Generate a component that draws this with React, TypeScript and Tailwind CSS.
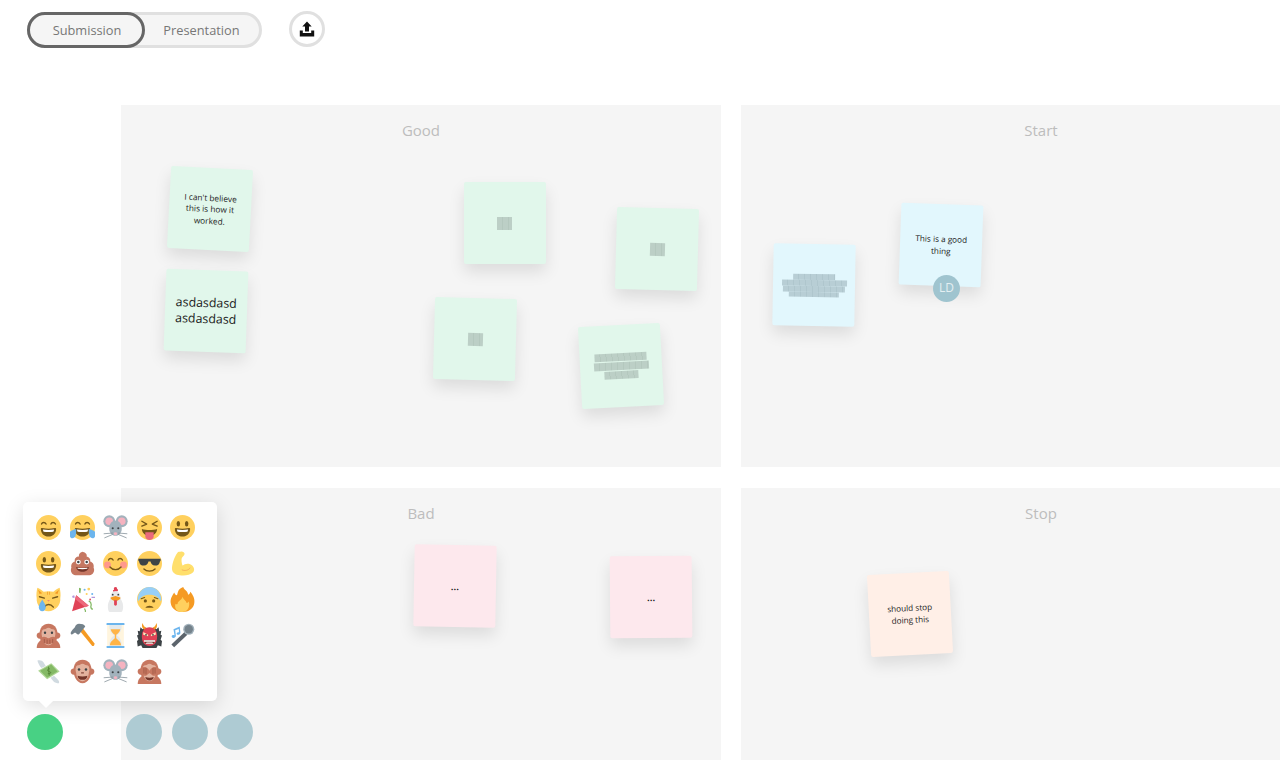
import React from "react";

const Y = "#FFCC4D";
const B = "#664500";

const Face = ({ children }: { children?: React.ReactNode }) => (
  <>
    <circle cx="18" cy="18" r="18" fill={Y} />
    {children}
  </>
);
const OpenMouth = () => (
  <>
    <path d="M7 20c0 6 4.500 11 11 11s11-5 11-11c0-1-1-1.300-2-1.100-3 .6-6 .9-9 .9s-6-.3-9-.9c-1-.2-2 .1-2 1.100z" fill={B} />
    <path d="M10 21c2.500.5 5 .7 8 .7s5.500-.2 8-.7c0 1.500-.5 2.500-1 3-4 .6-10 .6-14 0-.5-.5-1-1.500-1-3z" fill="#fff" />
  </>
);
const SmileEyes = () => (
  <>
    <path d="M8 13c1-3 5-3 6.500 0" fill="none" stroke={B} strokeWidth="2" strokeLinecap="round" />
    <path d="M21.500 13c1-3 5-3 6.500 0" fill="none" stroke={B} strokeWidth="2" strokeLinecap="round" />
  </>
);
const DotEyes = () => (
  <>
    <ellipse cx="12" cy="12.500" rx="2.500" ry="4" fill={B} />
    <ellipse cx="24" cy="12.500" rx="2.500" ry="4" fill={B} />
  </>
);
const Mouse = () => (
  <>
    <circle cx="9" cy="9" r="8.500" fill="#99AAB5" />
    <circle cx="27" cy="9" r="8.500" fill="#99AAB5" />
    <circle cx="9" cy="9" r="5.500" fill="#F4ABBA" />
    <circle cx="27" cy="9" r="5.500" fill="#F4ABBA" />
    <path d="M18 8c6 0 9 6 9 12 0 6-5 10-9 10s-9-4-9-10c0-6 3-12 9-12z" fill="#99AAB5" />
    <circle cx="14" cy="19" r="1.500" fill="#292F33" />
    <circle cx="22" cy="19" r="1.500" fill="#292F33" />
    <ellipse cx="18" cy="27" rx="2.500" ry="2" fill="#F4ABBA" />
    <path d="M14 26l-13 1M14 28l-12 5M22 26l13 1M22 28l12 5" stroke="#66757F" strokeWidth="1" fill="none" />
  </>
);
const MonkeyHead = () => (
  <>
    <circle cx="5.500" cy="18" r="4.500" fill="#C1694F" />
    <circle cx="30.500" cy="18" r="4.500" fill="#C1694F" />
    <path d="M18 1c8 0 13 6 13 15s-5 19-13 19S5 25 5 16 10 1 18 1z" fill="#C1694F" />
    <path d="M18 7c3 0 3 2 6 2 3 0 4 3 4 6s-1 4-1 6c0 5-4 11-9 11s-9-6-9-11c0-2-1-3-1-6s1-6 4-6c3 0 3-2 6-2z" fill="#E0AA94" />
  </>
);
const MonkeyBody = () => <path d="M1 36c0-8 6-14 17-14s17 6 17 14z" fill="#C1694F" />;

const E: Record<string, React.ReactNode> = {
  grin: (
    <Face>
      <SmileEyes />
      <OpenMouth />
    </Face>
  ),
  joy: (
    <>
      <Face>
        <SmileEyes />
        <OpenMouth />
      </Face>
      <path d="M1 23c2-1 6-3 8-3 0 3 0 7-1 10-1 4-7 5-8 1-1-3-1-6 1-8z" fill="#5DADEC" />
      <path d="M35 23c-2-1-6-3-8-3 0 3 0 7 1 10 1 4 7 5 8 1 1-3 1-6-1-8z" fill="#5DADEC" />
    </>
  ),
  mouse: <Mouse />,
  tongue: (
    <Face>
      <path d="M7 9l7 4-7 3M29 9l-7 4 7 3" fill="none" stroke={B} strokeWidth="2" strokeLinecap="round" strokeLinejoin="round" />
      <path d="M7 20c3 1 7 1.500 11 1.500s8-.5 11-1.500c0 3-2 7-6 9H13c-4-2-6-6-6-9z" fill={B} />
      <path d="M12 25h12v6c0 3-3 5-6 5s-6-2-6-5z" fill="#E8596E" />
    </Face>
  ),
  smiley: (
    <Face>
      <DotEyes />
      <OpenMouth />
    </Face>
  ),
  poop: (
    <>
      <path d="M18 1c5 1 7 4 6 7 4 1 6 4 5 7 4 1 6 5 5 9 2 4 0 10-6 11H8c-6-1-8-7-6-11-1-4 1-8 5-9-1-4 2-7 6-7-1-3 1-6 5-7z" fill="#BF6952" />
      <circle cx="12" cy="16" r="3.500" fill="#fff" />
      <circle cx="24" cy="16" r="3.500" fill="#fff" />
      <circle cx="12" cy="16" r="1.800" fill="#292F33" />
      <circle cx="24" cy="16" r="1.800" fill="#292F33" />
      <path d="M9 23c5 1.500 13 1.500 18 0 0 4-4 7-9 7s-9-3-9-7z" fill="#662113" />
      <path d="M11 24c4 .8 10 .8 14 0v1.500c-4 .8-10 .8-14 0z" fill="#fff" />
    </>
  ),
  blush: (
    <Face>
      <SmileEyes />
      <circle cx="6.500" cy="20" r="5" fill="#FF7892" opacity=".75" />
      <circle cx="29.500" cy="20" r="5" fill="#FF7892" opacity=".75" />
      <path d="M10 23c4 5 12 5 16 0" fill="none" stroke={B} strokeWidth="2" strokeLinecap="round" />
    </Face>
  ),
  cool: (
    <Face>
      <path d="M2 11h32v3l-1 1c-.5 4-3 6-7 6-4 0-6-3-6.500-6h-3c-.5 3-2.500 6-6.500 6s-6.500-2-7-6l-1-1z" fill="#292F33" />
      <path d="M10 26c4 4 12 4 16 0" fill="none" stroke={B} strokeWidth="2" strokeLinecap="round" />
    </Face>
  ),
  muscle: (
    <>
      <path d="M15 1c3-1 6 1 6 3 0 3-3 4-4 6-1 3 0 8 1 11 3-3 9-4 13-1 4 3 5 8 2 11-4 4-12 5-19 4-6-1-10-3-11-8-1-6 3-19 8-25 1-1 2-1 4-1z" fill="#FFDC5D" />
      <path d="M17 27c4 2 10 1 12-3" fill="none" stroke="#EF9645" strokeWidth="1" />
    </>
  ),
  crycat: (
    <>
      <path d="M2 1c3 1 7 4 9 6 4-1 10-1 14 0 2-2 6-5 9-6 1 4 2 10 1 15 1 10-7 19-17 19S0 26 1 16C0 11 1 5 2 1z" fill="#FFCC4D" />
      <path d="M3 4l6 5-4 1zM33 4l-6 5 4 1z" fill="#F4900C" />
      <path d="M16 7h1v4h-1zM19 7h1v4h-1z" fill="#F4900C" />
      <path d="M5 14l7 2M31 14l-7 2" stroke={B} strokeWidth="2" strokeLinecap="round" />
      <path d="M12 29c3-5 9-5 13 0" fill="none" stroke={B} strokeWidth="2" strokeLinecap="round" />
      <path d="M18 21l-2-2h4z" fill="#E0607E" />
      <path d="M9 18c2 4 5 7 5 11 0 3-2 6-5 6s-5-3-5-6c0-4 3-7 5-11z" fill="#5DADEC" />
    </>
  ),
  party: (
    <>
      <path d="M3 35l6-23 18 15z" fill="#DD2E44" />
      <path d="M9 12l18 15-5 2L7 17z" fill="#EA596E" />
      <path d="M3 13l3-1 1 3-3 1zM31 14h5v2h-5z" fill="#AA8DD8" />
      <path d="M13 1l3 1-1 7-2-1z" fill="#77B255" />
      <circle cx="21" cy="4" r="1.500" fill="#5DADEC" />
      <circle cx="27" cy="3" r="2" fill="#FFCC4D" />
      <circle cx="24" cy="10" r="1.500" fill="#FFCC4D" />
      <circle cx="32" cy="10" r="1.500" fill="#5DADEC" />
      <path d="M27 20c4 2 4 5 3 8 0 3 2 4 3 4M21 31c0 2 2 2 1 5" fill="none" stroke="#77B255" strokeWidth="1.800" />
      <circle cx="29" cy="18" r="1.300" fill="#DD2E44" />
    </>
  ),
  chicken: (
    <>
      <path d="M18 0c2 0 3 2 2 3 2 0 2 2 1 3l-6 1c-1-1-1-3 1-3-1-2 0-4 2-4z" fill="#DD2E44" />
      <path d="M18 6c5 0 7 4 7 9 0 2 4 6 4 13 0 5-1 8-3 8H10c-2 0-3-3-3-8 0-7 4-11 4-13 0-5 2-9 7-9z" fill="#E6E7E8" />
      <path d="M11 15l7-2 7 2c1 2-4 5-7 5s-8-3-7-5z" fill="#F4900C" />
      <circle cx="14" cy="11" r="1.300" fill="#292F33" />
      <circle cx="22" cy="11" r="1.300" fill="#292F33" />
      <path d="M16 19h4v6c0 1.500-1 2-2 2s-2-.5-2-2z" fill="#DD2E44" />
    </>
  ),
  fear: (
    <Face>
      <path d="M1 19C1 8 8 0 18 0s17 8 17 19c0 1-1 1-2 0-3-6-9-8-15-8S6 13 3 19c-1 1-2 1-2 0z" fill="#8CCAF7" />
      <circle cx="12" cy="20" r="2.300" fill={B} />
      <circle cx="24" cy="20" r="2.300" fill={B} />
      <path d="M6 17l5-2M30 17l-5-2" stroke={B} strokeWidth="1.500" strokeLinecap="round" />
      <path d="M12 30c2-4 10-4 12 0z" fill={B} />
    </Face>
  ),
  fire: (
    <>
      <path d="M19 0c2 5 7 6 7 11 2 0 3-2 3-4 4 4 7 10 6 16-1 8-8 13-17 13S2 31 1 23C0 16 4 12 6 8c1 2 2 4 4 4 2-4 0-8 9-12z" fill="#F4900C" />
      <path d="M18 14c1 4 5 5 6 9 2 0 2-1 3-2 2 5 0 15-9 15S6 30 8 24c1 1 2 1 3 0 0-4 6-5 7-10z" fill="#FFCC4D" />
    </>
  ),
  speak: (
    <>
      <MonkeyBody />
      <MonkeyHead />
      <circle cx="13" cy="14" r="1.700" fill="#292F33" />
      <circle cx="23" cy="14" r="1.700" fill="#292F33" />
      <path d="M8 21c4-3 7 0 10 1 3-1 6-4 10-1 1 4-4 9-10 10-6-1-11-6-10-10z" fill="#C1694F" />
      <path d="M12 23v6M16 24v6M20 24v6M24 23v6" stroke="#662113" strokeWidth=".6" />
    </>
  ),
  hammer: (
    <>
      <path d="M14 11l4-4 17 22c1 2-1 5-3 4z" fill="#F4900C" />
      <path d="M13 1c4 0 8 1 9 4l-8 10c-2 2-3 2-4 1l-2-2c-2 0-3 1-4 2-1 1-3 0-3-1v-1c1-3 4-6 6-8 1-3 3-5 6-5z" fill="#66757F" />
    </>
  ),
  hourglass: (
    <>
      <path d="M6 3h24v30H6z" fill="#FFE8B6" opacity=".5" />
      <path d="M9 3h18c0 7-2 12-7 15 5 3 7 8 7 15H9c0-7 2-12 7-15-5-3-7-8-7-15z" fill="#E1E8ED" />
      <path d="M11 9h14c-1 4-4 7-6 8v5c2 2 7 5 7 10H10c0-5 5-8 7-10v-5c-2-1-5-4-6-8z" fill="#FFAC33" />
      <rect x="5" y="0" width="26" height="3" rx="1" fill="#5DADEC" />
      <rect x="5" y="33" width="26" height="3" rx="1" fill="#5DADEC" />
    </>
  ),
  ogre: (
    <>
      <path d="M1 34l-1-8 2-2-2-6 2-1-1-6 3 1 1-6 3 3 3-3 3 2h8l3-2 3 3 3-3 1 6 3-1-1 6 2 1-2 6 2 2-1 8-5-2-2 4H8l-2-4z" fill="#292F33" />
      <path d="M8 0c-2 5 0 8 3 10l3-3C11 6 9 4 8 0zM28 0c2 5 0 8-3 10l-3-3c3-1 5-3 6-7z" fill="#F4900C" />
      <path d="M18 6c7 0 11 5 11 13 0 9-4 14-11 14S7 28 7 19C7 11 11 6 18 6z" fill="#DD2E44" />
      <path d="M9 13l7 4v2l-7-2zM27 13l-7 4v2l7-2z" fill="#FFE8B6" />
      <circle cx="13" cy="17" r="1.300" fill="#292F33" />
      <circle cx="23" cy="17" r="1.300" fill="#292F33" />
      <path d="M10 25h16l-2 5H12z" fill="#662113" />
      <path d="M10 25h16v2H10zM12 30l2-2h8l2 2z" fill="#fff" />
    </>
  ),
  mic: (
    <>
      <path d="M21 13l4 4L6 35l-4-4z" fill="#4B545D" />
      <circle cx="27" cy="9" r="8" fill="#99AAB5" />
      <circle cx="27" cy="9" r="6" fill="#66757F" />
      <path d="M5 9l9-4 1 9c0 2-2 3-3 3-3 0-3-3-1-3.500 1-.3 2 0 2 0l-.5-5-5 2 1 8c0 2-2 3-3 3-3 0-4-3-2-4 1-.5 2 0 3 0z" fill="#5DADEC" />
    </>
  ),
  money: (
    <>
      <path d="M3 17L22 6l12 12-18 11z" fill="#A7D28B" />
      <path d="M6 17L22 8l9 10-15 9z" fill="#77B255" />
      <path d="M20 14c-3 0-4 2-3 3s3 1 4 2-1 3-4 2M18 11l1 13" fill="none" stroke="#3E721D" strokeWidth="1.200" />
      <path d="M2 2c4-1 7 0 9 3l3 5-6 3C5 10 3 6 2 2zM26 24l5 5c2 2 3 4 2 6-3 0-6-1-8-3l-4-5z" fill="#CCD6DD" />
    </>
  ),
  monkey: (
    <>
      <MonkeyHead />
      <circle cx="13" cy="15" r="1.800" fill="#292F33" />
      <circle cx="23" cy="15" r="1.800" fill="#292F33" />
      <path d="M16 20h4" stroke="#662113" strokeWidth="1.500" />
      <path d="M11 24c4 1.500 10 1.500 14 0 0 4-3 6-7 6s-7-2-7-6z" fill="#662113" />
    </>
  ),
  see: (
    <>
      <MonkeyBody />
      <MonkeyHead />
      <path d="M4 18c0-6 6-7 9-6 2 1 4 3 5 5 1-2 3-4 5-5 3-1 9 0 9 6 0 5-5 7-9 6l-5-4-5 4c-4 1-9-1-9-6z" fill="#C1694F" />
      <path d="M10 13v8M13 13v9M23 13v9M26 13v8" stroke="#662113" strokeWidth=".6" />
      <path d="M12 26c4 1.500 8 1.500 12 0 0 3-3 5-6 5s-6-2-6-5z" fill="#662113" />
    </>
  ),
};

const rows = [
  ["grin", "joy", "mouse", "tongue", "smiley"],
  ["smiley", "poop", "blush", "cool", "muscle"],
  ["crycat", "party", "chicken", "fear", "fire"],
  ["speak", "hammer", "hourglass", "ogre", "mic"],
  ["money", "monkey", "mouse", "see"],
];

const noteBase =
  "absolute flex h-[82px] w-[82px] flex-col items-center justify-center rounded-[2px] shadow-[0_8px_16px_rgba(0,0,0,0.1)]";
const GREEN = "bg-[#e1f7eb]";
const BLUE = "bg-[#e2f7fd]";
const PINK = "bg-[#fde8ed]";
const PEACH = "bg-[#ffefe7]";
const GREEN_BAR = "bg-[repeating-linear-gradient(90deg,#bccfc6_0_5px,#b4c8be_5px_6px)]";
const BLUE_BAR = "bg-[repeating-linear-gradient(90deg,#b8ced5_0_5px,#afc6cd_5px_6px)]";

function Panel({ title, children }: { title: string; children?: React.ReactNode }) {
  return (
    <section className="relative h-[362px] w-[600px] bg-[#f5f5f5] pt-[14px] text-center">
      <h2 className="text-[15px] leading-[22px] text-[#bdbdbd]">{title}</h2>
      {children}
    </section>
  );
}

const Redact = ({ w, c, h }: { w: string; c: string; h: string }) => <div className={`${w} ${c} ${h}`} />;

export default function App() {
  return (
    <div className="relative h-[760px] w-[1280px] overflow-hidden bg-white font-['Open_Sans',sans-serif]">
      <header className="flex h-[105px] items-start pl-[27px] pt-[11px]">
        <div className="mt-px flex h-[36px] w-[235px] rounded-full border-[3px] border-[#e0e0e0] bg-[#f5f5f5] text-[12.800px] leading-[28px] text-[#777]">
          <div className="-m-[3px] flex h-[36px] w-[118px] items-center justify-center rounded-full border-[3px] border-[#666] bg-[#f5f5f5] pb-px pl-[2px]">
            Submission
          </div>
          <div className="flex flex-1 items-center justify-center pb-px pl-[2px]">Presentation</div>
        </div>
        <div className="ml-[27px] flex h-[36px] w-[36px] items-center justify-center rounded-full border-[3px] border-[#e0e0e0] bg-white">
          <svg width="16" height="16" viewBox="0 0 16 16" fill="#111">
            <path d="M8 0.500L3.300 5.500H6V10.500H10V5.500H12.700z" />
            <path d="M0.800 9.500H3.800V12H12.200V9.500H15.200V15.500H0.800z" />
          </svg>
        </div>
      </header>

      <main className="grid grid-cols-[600px_600px] gap-x-[20px] gap-y-[20.500px] pl-[121px]">
        <Panel title="Good">
          <div className={`${noteBase} ${GREEN} left-[48px] top-[63px] rotate-[3deg] text-[8.300px] leading-[11.300px] text-[#222]`}>
            <p className="w-[60px]">I can't believe this is how it worked.</p>
          </div>
          <div className={`${noteBase} ${GREEN} left-[43.500px] top-[165px] rotate-[2deg] text-[12.400px] leading-[16.500px] text-[#222]`}>
            <p>asdasdasd<br />asdasdasd</p>
          </div>
          <div className={`${noteBase} ${GREEN} left-[342.500px] top-[77px]`}>
            <Redact w="w-[15px]" h="h-[13px]" c={GREEN_BAR} />
          </div>
          <div className={`${noteBase} ${GREEN} left-[495px] top-[103px] rotate-[1.500deg]`}>
            <Redact w="w-[15px]" h="h-[13px]" c={GREEN_BAR} />
          </div>
          <div className={`${noteBase} ${GREEN} left-[312.500px] top-[192.500px] rotate-[1.500deg]`}>
            <Redact w="w-[15px]" h="h-[13px]" c={GREEN_BAR} />
          </div>
          <div className={`${noteBase} ${GREEN} left-[459px] top-[220px] -rotate-[3deg] gap-px`}>
            <Redact w="w-[52px]" h="h-[8px]" c={GREEN_BAR} />
            <Redact w="w-[55px]" h="h-[8px]" c={GREEN_BAR} />
            <Redact w="w-[34px]" h="h-[8px]" c={GREEN_BAR} />
          </div>
        </Panel>

        <Panel title="Start">
          <div className={`${noteBase} ${BLUE} left-[32px] top-[139px] rotate-[1deg]`}>
            <Redact w="w-[42px]" h="h-[6px]" c={BLUE_BAR} />
            <Redact w="w-[65px]" h="h-[6px]" c={BLUE_BAR} />
            <Redact w="w-[62px]" h="h-[6px]" c={BLUE_BAR} />
            <Redact w="w-[50px]" h="h-[5px]" c={BLUE_BAR} />
          </div>
          <div className={`${noteBase} ${BLUE} left-[158.500px] top-[99px] rotate-[2deg] text-[8.200px] leading-[12px] text-[#222]`}>
            <p className="w-[60px]">This is a good thing</p>
          </div>
          <div className="absolute left-[192px] top-[169.500px] flex h-[27px] w-[27px] items-center justify-center rounded-full bg-[#9fc4cf] text-[12px] text-[#e4eff2]">
            LD
          </div>
        </Panel>

        <Panel title="Bad">
          <div className={`${noteBase} ${PINK} left-[292.500px] top-[57px] rotate-[1deg] text-[10px] font-semibold leading-[12px] text-[#111]`}>...</div>
          <div className={`${noteBase} ${PINK} left-[488.500px] top-[68px] -rotate-[0.500deg] text-[10px] font-semibold leading-[12px] text-[#111]`}>...</div>
        </Panel>

        <Panel title="Stop">
          <div className={`${noteBase} ${PEACH} left-[128px] top-[85px] -rotate-[3deg] text-[8.200px] leading-[12px] text-[#222]`}>
            <p className="w-[56px]">should stop doing this</p>
          </div>
        </Panel>
      </main>

      <div className="absolute left-[23px] top-[502px] flex h-[199px] w-[194px] flex-col gap-[11.200px] rounded-[5px] bg-white pl-[13px] pt-[12.500px] shadow-[0_5px_20px_rgba(0,0,0,0.13)]">
        {rows.map((row, i) => (
          <div key={i} className="flex gap-[8.500px]">
            {row.map((name, j) => (
              <svg key={j} width="25" height="25" viewBox="0 0 36 36" className="shrink-0 opacity-90 blur-[0.3px]">
                {E[name]}
              </svg>
            ))}
          </div>
        ))}
        <div className="absolute left-[18px] top-[194px] h-[10px] w-[10px] rotate-45 bg-white" />
      </div>

      <div className="absolute left-[27px] top-[714px] h-[36px] w-[36px] rounded-full bg-[#48d184]" />
      <div className="absolute left-[126px] top-[714px] flex gap-[9.500px]">
        <div className="h-[36px] w-[36px] rounded-full bg-[#aecbd3]" />
        <div className="h-[36px] w-[36px] rounded-full bg-[#aecbd3]" />
        <div className="h-[36px] w-[36px] rounded-full bg-[#aecbd3]" />
      </div>
    </div>
  );
}
